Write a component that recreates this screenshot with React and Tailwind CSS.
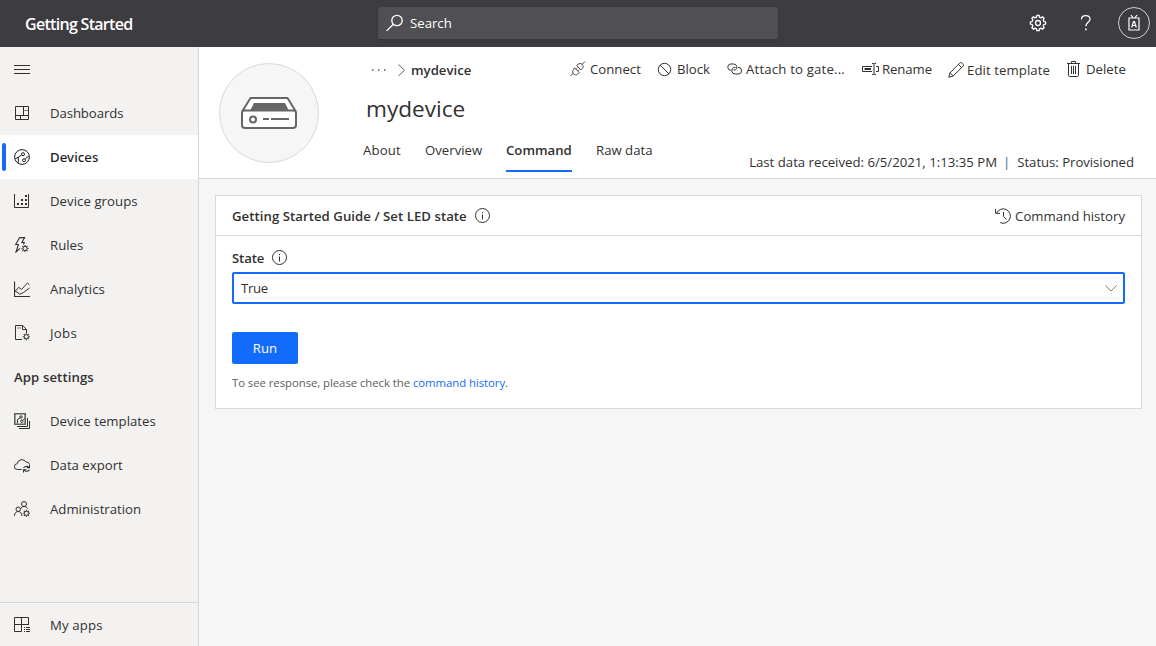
import React from 'react'

// Outline of a cog with `n` flat teeth between the inner and outer radius.
function cogPath(cx, cy, outer, inner, n = 8) {
  const step = (Math.PI * 2) / n
  const pts = []
  for (let i = 0; i < n; i++) {
    const a = i * step - Math.PI / 2
    const at = (r, d) => `${(cx + r * Math.cos(a + d * step)).toFixed(2)} ${(cy + r * Math.sin(a + d * step)).toFixed(2)}`
    pts.push(at(inner, -0.3), at(outer, -0.2), at(outer, 0.2), at(inner, 0.3))
  }
  return `M${pts.join('L')}Z`
}

function Icon({ w = 16, h = 16, sw = 1, className = '', children }) {
  return (
    <svg width={w} height={h} viewBox={`0 0 ${w} ${h}`} fill="none" stroke="currentColor" strokeWidth={sw} className={`shrink-0 ${className}`}>
      {children}
    </svg>
  )
}

// Small badge cog: a ring with short spokes, legible at about 7px.
function MiniCog({ x, y }) {
  return (
    <g transform={`translate(${x} ${y})`}>
      <circle r="2.1" />
      <path d="M0-2.400v-1.100M0 2.400v1.100M-2.400 0h-1.100M2.400 0h1.100M-1.700-1.700l-.8-.8M1.700-1.700l.8-.8M-1.700 1.700l-.8.8M1.700 1.700l.8.8" strokeWidth="1.100" />
    </g>
  )
}

const MenuIcon = () => (
  <Icon><path d="M0 4.500h16M0 8.500h16M0 12.500h16" /></Icon>
)
const DashboardIcon = () => (
  <Icon><path d="M1.5 1.5h13v13h-13zM9.5 1.5v9M1.5 10.5h13M6.5 10.5v4" /><path d="M9.5 5.5h5" opacity=".6" /></Icon>
)
const DeviceIcon = () => (
  <Icon>
    <circle cx="8" cy="8" r="7.4" />
    <circle cx="9" cy="5.2" r="1.5" />
    <circle cx="10" cy="11.2" r="1.5" />
    <path d="M7.6 6 4.3 8.2v5.6M11.2 10.1 13 8.3l1.7-.9M1.2 9.8l3.1-1.6" />
  </Icon>
)
const GroupsIcon = () => (
  <Icon>
    <path d="M.5 1v13.500h14V1" />
    <path d="M3 11h2M7 11h2M11 11h2M7 7h2M11 7h2M11 3h2" strokeWidth="2" />
  </Icon>
)
const RulesIcon = () => (
  <Icon>
    <path d="M5.6.6h5L7.9 5.5h2.8M5.6.6 1.7 7.5h2.7L2 15l4-3.6M10.7 5.5l-1.5 1.8" strokeWidth="1.1" />
    <MiniCog x={11} y={11.500} />
  </Icon>
)
const AnalyticsIcon = () => (
  <Icon>
    <path d="M.5.5v15H16" strokeWidth="1.200" />
    <path d="m1 10.300 3.800-4 2.700 2.200L13.400 2l2 1.800M1 9.800l4.800 3.400 3.400-1.500L15.600 7" />
  </Icon>
)
const JobsIcon = () => (
  <Icon>
    <path d="M8 14.5H1.5v-14h7.2l3.8 3.8V8M8.5.8v3.7h3.8" />
    <path d="M3.5 3h3.8" strokeDasharray="1.2 .8" />
    <MiniCog x={12.300} y={11.700} />
  </Icon>
)
const TemplatesIcon = () => (
  <Icon>
    <path d="M.8.8h10.400v10.400H.8z" strokeWidth="1.600" opacity=".75" />
    <circle cx="7" cy="4" r="1.200" />
    <circle cx="7.800" cy="8.200" r="1.200" />
    <path d="M6 4.800 3.400 6.600v3.800M8.800 7.400l2-2M13.500 5v8.500H3M15.500 8v7.500H5" />
  </Icon>
)
const ExportIcon = () => (
  <Icon>
    <path d="M7.600 12.500H3.400A2.900 2.900 0 0 1 3.200 6.700 4.700 4.700 0 0 1 12 5.100a3 3 0 0 1 3.600 2.500" />
    <path d="M9.600 10.900c.8-1.700 3.800-2.100 5.200-.4M15.500 8v2.800h-2.800M15.400 12.700c-.8 1.700-3.800 2.100-5.200.4M9.500 15.600v-2.800h2.800" strokeWidth="1.100" />
  </Icon>
)
const AdminIcon = () => (
  <Icon>
    <circle cx="10" cy="3" r="2.500" />
    <circle cx="4.200" cy="8.200" r="2.200" />
    <path d="M.5 15c0-2.800 1.500-4.500 3.700-4.500S7.900 12.200 7.900 15M6.600 7.800C7.200 6.300 8.400 5.500 10 5.500c1.800 0 3 .9 3.600 2.200" />
    <MiniCog x={12.400} y={12.300} />
  </Icon>
)
const AppsIcon = () => (
  <Icon>
    <path d="M7.500 14.500h-7V.5h14v7H.5M7.500.5v14M14.500 7v1" />
    <path d="M10 10.500h1M12 10.500h4M10 12.500h1M12 12.500h4M10 14.500h1M12 14.500h4" />
  </Icon>
)
const InfoIcon = ({ className }) => (
  <Icon className={className}>
    <circle cx="8.500" cy="7.500" r="7" />
    <path d="M8.500 6.500v5M8.500 4v1.200" />
  </Icon>
)

const nav = [
  ['Dashboards', DashboardIcon, 'tracking-[-0.1px]'],
  ['Devices', DeviceIcon, 'tracking-[0.08px]'],
  ['Device groups', GroupsIcon, 'tracking-[0.05px]'],
  ['Rules', RulesIcon, ''],
  ['Analytics', AnalyticsIcon, 'tracking-[0.07px]'],
  ['Jobs', JobsIcon, 'tracking-[0.3px]'],
]
const settingsNav = [
  ['Device templates', TemplatesIcon, 'tracking-[0.02px]'],
  ['Data export', ExportIcon, ''],
  ['Administration', AdminIcon, ''],
]

function NavItem({ label, icon: Glyph, active, tracking }) {
  return (
    <a className={`relative flex h-11 items-center pl-3.5 ${active ? "bg-white font-['Noto_Sans'] font-medium text-[#201f1e]" : ''}`}>
      {active && <span className="absolute top-2 left-0.5 h-7 w-1 rounded-sm bg-[#136bfb]" />}
      <Glyph />
      <span className={`pl-5 ${tracking}`}>{label}</span>
    </a>
  )
}

const actions = [
  {
    label: 'Connect', box: 'w-[88px]', gap: 'w-[21px] pl-px',
    icon: (
      <Icon>
        <path d="m.5 15 3-3M12 3.500l3-3M4.500 6.800l4.700 4.700-1.500 1.500c-1.300 1.200-2.900 1.100-4.100-.1s-1.300-2.900-.1-4.100zM6.700 4.700 8 3.400c1.300-1.200 3-1.200 4.200 0s1.200 2.900 0 4.200L10.900 8.900zM6.200 8.200l1.300-1.300M7.900 9.900l1.300-1.300" strokeWidth=".9" />
      </Icon>
    ),
  },
  {
    label: 'Block', box: 'w-[69px]', gap: 'w-5',
    icon: <Icon><circle cx="7.500" cy="8.500" r="6.200" /><path d="m3.200 4.100 8.700 8.800" /></Icon>,
  },
  {
    label: 'Attach to gate...', box: 'w-[136px] tracking-[0.18px]', gap: 'w-5',
    icon: (
      <Icon w={18}>
        <path d="M5 9.300a3.200 3.200 0 0 1-.8-6.300h3.600a3.200 3.200 0 0 1 1.400 6H7.500" />
        <path d="M12 6.300a3.400 3.400 0 0 1 1 6.700H9.200a3.400 3.400 0 0 1-1.400-6.500h1.700" />
      </Icon>
    ),
  },
  {
    label: 'Rename', box: 'w-[86px] tracking-[-0.1px]', gap: 'w-5',
    icon: (
      <Icon w={17}>
        <path d="M10 5.500H.5v5H10M14 5.500h2.500v5H14M10 2.500h1.500l.5.500.500-.5H14M10 13.500h1.500l.5-.5.500.5H14M12 3v10" />
        <path d="M2.500 8h6.500" strokeWidth="2" />
      </Icon>
    ),
  },
  {
    label: 'Edit template', box: 'w-[119px] pt-px tracking-[0.08px]', gap: 'w-[19px]',
    icon: (
      <Icon>
        <path d="M.8 15.200 2 10.800 11.600 1.200c.8-.8 2-.8 2.700 0l.5.500c.8.700.8 2 0 2.700L5.200 14zM2 10.800 5.200 14M10.400 2.400l3.200 3.200" />
      </Icon>
    ),
  },
  {
    label: 'Delete', box: '', gap: 'w-[19px]',
    icon: (
      <Icon>
        <path d="M0 2.500h13M4.500 2.500v-2h4v2M1.500 2.500v12c0 .600.400 1 1 1h8c.600 0 1-.400 1-1v-12M4.500 5v8M6.500 5v8M8.500 5v8" />
      </Icon>
    ),
  },
]

function Header() {
  return (
    <header className="flex h-[47px] shrink-0 items-center bg-[#3d3c41] text-white">
      <h1 className="w-[378px] pl-[25px] text-[16px] font-semibold tracking-[-0.7px]">Getting Started</h1>
      <div className="mb-px flex h-8 w-[400px] items-center rounded-xs bg-[#504f53] pl-2 shadow-sm">
        <Icon w={18} h={18} sw={1.300}>
          <circle cx="11" cy="6.500" r="5.200" />
          <path d="M7.300 10.200.6 16.900" />
        </Icon>
        <span className="pl-1.5">Search</span>
      </div>
      <div className="ml-auto flex items-center pr-1.5 pb-px">
        <Icon w={18} h={18} sw={1.300}>
          <path d={cogPath(9, 9, 7.700, 6)} strokeLinejoin="round" />
          <circle cx="9" cy="9" r="2.500" />
        </Icon>
        <Icon w={12} h={18} sw={1.300} className="ml-[33px]">
          <path d="M1.500 5.400C1.500 3 3.200 1.600 5.700 1.600s4.300 1.400 4.300 3.600c0 3-4.100 3.300-4.100 7" />
          <path d="M5.900 14.400v1.800" strokeWidth="1.600" />
        </Icon>
        <span className="ml-[26px] flex size-8 items-center justify-center rounded-full border border-[#d0d0d0]">
          <Icon w={14} h={18} sw={1.200}>
            <path d="M2 4h10v12H2zM4 1l2.200 3M10 1 7.800 4" />
            <path d="M4.700 13.500 6.500 7.500h1l1.800 6M5.300 11.500h3.400" />
          </Icon>
        </span>
      </div>
    </header>
  )
}

function Sidebar() {
  return (
    <nav className="flex w-[199px] shrink-0 flex-col border-r border-[#d6d6d6] bg-[#f3f2f1]">
      <div className="flex h-11 items-center pl-3.5"><MenuIcon /></div>
      {nav.map(([label, icon, tracking]) => (
        <NavItem key={label} label={label} icon={icon} tracking={tracking} active={label === 'Devices'} />
      ))}
      <h2 className="flex h-11 items-center pl-3.5 font-semibold tracking-[0.09px]">App settings</h2>
      {settingsNav.map(([label, icon, tracking]) => (
        <NavItem key={label} label={label} icon={icon} tracking={tracking} />
      ))}
      <div className="mt-auto border-t border-[#d6d6d6]">
        <div className="-mb-px"><NavItem label="My apps" icon={AppsIcon} tracking="tracking-[0.15px]" /></div>
      </div>
    </nav>
  )
}

function DeviceHeader() {
  return (
    <div className="flex h-[132px] shrink-0 border-b border-[#d6d6d6] bg-white pl-5">
      <div className="mt-4 flex size-[100px] shrink-0 items-center justify-center rounded-full border border-[#d9d9d9] bg-[#f6f6f6]">
        <svg width="58" height="34" viewBox="0 0 58 34" fill="none" stroke="#666" strokeWidth="2" className="shrink-0">
          <rect x="2" y="14" width="54" height="18" rx="3" fill="#fff" />
          <path d="M2.800 14.500 10.500 2h37l7.700 12.500z" fill="#fff" strokeLinejoin="round" />
          <path d="M14 7h31l4 8H10z" fill="#666" stroke="none" />
          <circle cx="13" cy="23.500" r="3" />
          <path d="M23 23h6M31 23h18" />
        </svg>
      </div>
      <div className="ml-11 flex flex-1 flex-col">
        <div className="flex h-[45px] items-center">
          <div className="flex w-[206px] items-center pt-px pl-2">
            <Icon className="text-[#605e5c]"><path d="M1 8h1.600M7 8h1.600M13 8h1.600" strokeWidth="1.600" /></Icon>
            <Icon w={9} className="ml-[10px] text-[#605e5c]"><path d="m1.500 2.500 6 5.700-6 5.700" /></Icon>
            <span className="pl-[5px] font-semibold">mydevice</span>
          </div>
          <div className="flex items-center pb-px">
            {actions.map(({ label, box, gap, icon }) => (
              <button key={label} className={`flex items-center whitespace-nowrap ${box}`}>
                <span className={`flex shrink-0 ${gap}`}>{icon}</span>
                {label}
              </button>
            ))}
          </div>
        </div>
        <h2 className="flex h-[34px] items-center pl-[3px] text-[22.600px]">mydevice</h2>
        <div className="mt-[3px] flex h-[43px] gap-6">
          <a className="flex w-[38px] items-center pb-0.5 tracking-[0.15px]">About</a>
          <a className="flex w-[57px] items-center pb-0.5">Overview</a>
          <a className="flex w-[66px] items-center border-b-2 border-[#136bfb] font-semibold">Command</a>
          <a className="flex w-[57px] items-center pb-0.5">Raw data</a>
          <p className="mr-[22px] ml-auto self-end whitespace-pre">
            Last data received: 6/5/2021, 1:13:35 PM<span className="pr-[7px] pl-1.5 text-[#2b6a94]">|</span><span className="tracking-[-0.04px]">Status: Provisioned</span>
          </p>
        </div>
      </div>
    </div>
  )
}

function CommandCard() {
  return (
    <section className="m-4 mr-3.5 flex h-[214px] flex-col border border-[#d9d9d9] bg-white">
      <div className="flex h-10 shrink-0 items-center border-b border-[#d9d9d9] px-4">
        <h3 className="font-semibold tracking-[0.04px]">Getting Started Guide / Set LED state</h3>
        <InfoIcon className="ml-[7px]" />
        <button className="ml-auto flex items-center">
          <Icon w={17} className="mr-[3px]">
            <path d="M1.600 5.200A7.200 7.200 0 1 1 5.200 14.600M.6.900v4.400H5M8.500 4v4.500l3 3" />
          </Icon>
          Command history
        </button>
      </div>
      <div className="flex flex-col items-start px-4 pt-[13px]">
        <label className="flex h-[18px] items-center font-semibold tracking-[-0.15px]">State<InfoIcon className="ml-[7px]" /></label>
        <div className="mt-[5px] flex h-8 w-full items-center justify-between rounded-xs border-2 border-[#136bfb] pr-[5px] pl-[7px]">
          <span className="tracking-[-0.3px]">True</span>
          <Icon w={14} className="text-[#a07a5c]"><path d="m1.300 5.500 5.700 5.500 5.700-5.500" /></Icon>
        </div>
        <button className="mt-7 h-8 w-[66px] rounded-xs bg-[#136bfb] tracking-[0.1px] text-white">Run</button>
        <p className="mt-2.5 text-[11.400px] leading-[18px] tracking-[-0.07px] text-[#605e5c]">
          To see response, please check the <a className="text-[#136bfb]">command history</a>.
        </p>
      </div>
    </section>
  )
}

export default function App() {
  return (
    <div className="flex h-[646px] w-[1156px] flex-col overflow-hidden bg-[#f6f6f6] font-['Open_Sans',sans-serif] text-[13.200px] leading-5 text-[#323130]">
      <Header />
      <div className="flex min-h-0 flex-1">
        <Sidebar />
        <main className="flex min-w-0 flex-1 flex-col">
          <DeviceHeader />
          <CommandCard />
        </main>
      </div>
    </div>
  )
}
